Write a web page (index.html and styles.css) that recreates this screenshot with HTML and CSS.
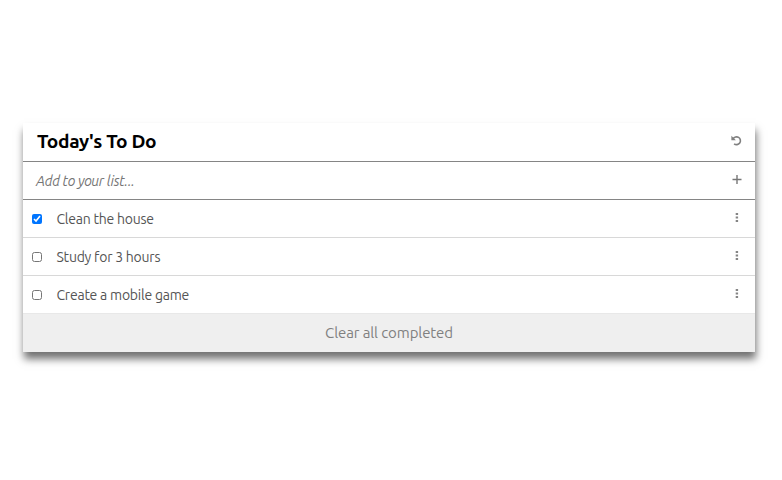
FILE: index.html
```html
<!DOCTYPE html>
<html lang="en">
<head>
<meta charset="utf-8">
<title>Today's To Do</title>
<link rel="stylesheet" href="styles.css">
</head>
<body>
<main class="todo">
  <header class="row title-row">
    <h1>Today's To Do</h1>
    <svg class="icon undo" viewBox="0 0 11 11"><path d="M2.1 3.9A3.9 3.9 0 1 1 3.1 8.8" fill="none" stroke="#808080" stroke-width="1.6"/><path d="M.4.8v4.5h4.5z" fill="#808080"/></svg>
  </header>
  <div class="row add-row">
    <span class="placeholder">Add to your list...</span>
    <svg class="icon plus" viewBox="0 0 11 11"><path d="M6 1v9M1.5 5.5h9" fill="none" stroke="#777" stroke-width="1.4"/></svg>
  </div>
  <label class="row task"><input type="checkbox" checked><span>Clean the house</span><svg class="icon dots" viewBox="0 0 11 11"><path d="M4.7 1h2.4v2H4.7zM4.7 4.5h2.4v2H4.7zM4.7 8h2.4v2H4.7z" fill="#858585"/></svg></label>
  <label class="row task"><input type="checkbox"><span>Study for 3 hours</span><svg class="icon dots" viewBox="0 0 11 11"><path d="M4.7 1h2.4v2H4.7zM4.7 4.5h2.4v2H4.7zM4.7 8h2.4v2H4.7z" fill="#858585"/></svg></label>
  <label class="row task"><input type="checkbox"><span>Create a mobile game</span><svg class="icon dots" viewBox="0 0 11 11"><path d="M4.7 1h2.4v2H4.7zM4.7 4.5h2.4v2H4.7zM4.7 8h2.4v2H4.7z" fill="#858585"/></svg></label>
  <button class="clear">Clear all completed</button>
</main>
</body>
</html>
```
FILE: styles.css
```css
* { box-sizing: border-box; }
body {
  margin: 0;
  min-height: 100vh;
  padding: 123px 27px 0 23px;
  background: #fff;
  font-family: Ubuntu, "Noto Sans", sans-serif;
}
.todo {
  background: #fff;
  box-shadow: 1px 7px 8px 0 rgba(0, 0, 0, .56);
}
.row {
  display: flex;
  align-items: center;
  height: 38px;
  padding: 0 13px 0 9px;
  border-bottom: 1px solid #d8d8d8;
  font-size: 14px;
  letter-spacing: -.23px;
  color: #555;
}
.row:last-of-type {
  border-color: #e8e8e8;
}
.title-row {
  height: 39px;
  padding-left: 14px;
}
.row.title-row,
.row.add-row {
  border-color: #858585;
}
.add-row {
  padding-left: 13px;
}
h1 {
  margin: -2px 0 0;
  font-size: 19.2px;
  line-height: 24px;
  font-weight: 700;
  letter-spacing: -.35px;
  color: #000;
}
.placeholder {
  margin-top: 1px;
  font-style: italic;
  letter-spacing: -.3px;
  color: #757575;
}
.task span {
  margin-top: 1px;
}
.icon {
  width: 11px;
  height: 11px;
  margin: -2px 0 0 auto;
}
.undo {
  margin-top: -3px;
}
.plus {
  margin-top: -3px;
}
.task input {
  width: 10px;
  height: 10px;
  margin: 0 14.5px 0 0;
  accent-color: #0075ff;
}
.clear {
  display: block;
  width: 100%;
  height: 38px;
  padding: 0 0 2px;
  border: 0;
  background: #efefef;
  font-family: inherit;
  font-size: 15px;
  letter-spacing: -.1px;
  color: #808080;
}
```
